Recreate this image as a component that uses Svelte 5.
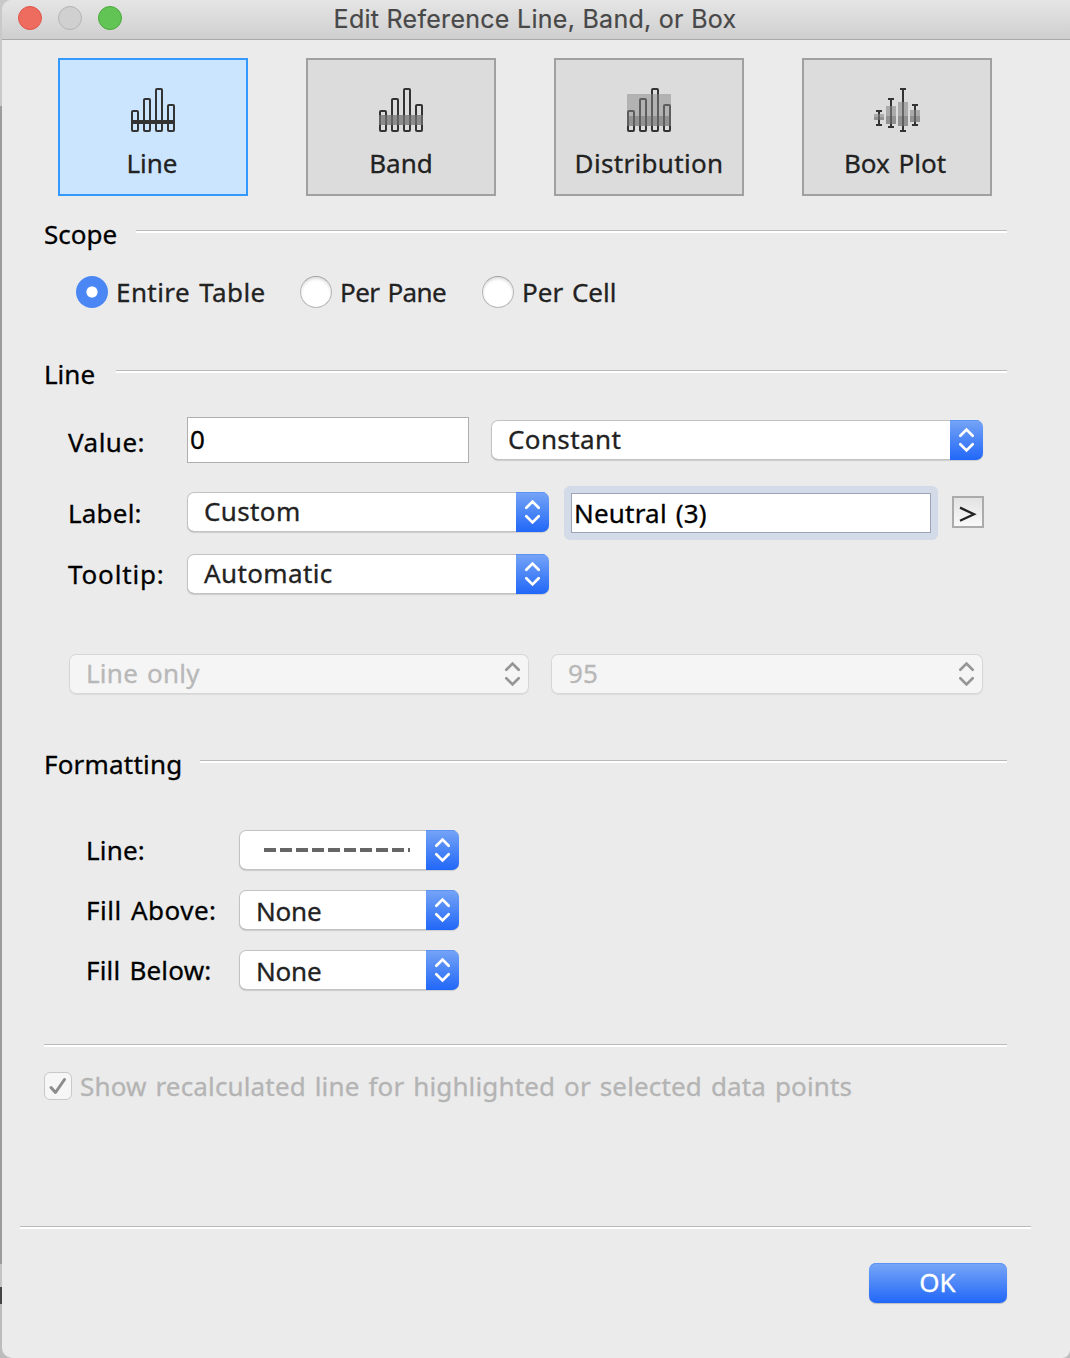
<script>
  const bars = [[1, 23], [13, 11], [25, 1], [37, 17]];
  // x, whisker top, whisker bottom, box top, box middle, box bottom
  const boxes = [
    [5, 22, 38, 26, 29, 32],
    [17, 10, 40, 18, 28, 36],
    [29, 0, 44, 14, 28, 38],
    [41, 16, 38, 22, 28, 34]
  ];
  const tabs = [
    { id: 'line', label: 'Line' },
    { id: 'band', label: 'Band' },
    { id: 'distribution', label: 'Distribution' },
    { id: 'box', label: 'Box Plot' }
  ];
  const scopes = ['Entire Table', 'Per Pane', 'Per Cell'];
  let tab = $state('line');
  let scope = $state('Entire Table');
</script>

{#snippet arrows()}
  <span class="arrows">
    <svg width="33" height="40" viewBox="0 0 33 40" fill="none" stroke-width="2.7" stroke-linecap="round" stroke-linejoin="miter">
      <path d="M10.3 15.8 L16.5 9.6 L22.7 15.8 M10.3 24.2 L16.5 30.4 L22.7 24.2" />
    </svg>
  </span>
{/snippet}

{#snippet select(cls, text)}
  <div class="select {cls}"><span class="value">{text}</span>{@render arrows()}</div>
{/snippet}

<div class="window">
  <header>
    <i class="light red"></i><i class="light grey"></i><i class="light green"></i>
    <h1><span>Edit Reference Line, Band, or Box</span></h1>
  </header>

  <nav>
    {#each tabs as t}
      <button class="tab {t.id}" class:active={tab === t.id} onclick={() => (tab = t.id)}>
        <svg width="46" height="44" viewBox="{t.id === 'box' ? 0 : -1} 0 46 44">
          {#if t.id === 'box'}
            {#each boxes as [x, top, bottom, b1, b2, b3]}
              <path d="M{x} {top}V{bottom}M{x - 3} {top + 1}H{x + 3}M{x - 3} {bottom - 1}H{x + 3}" stroke="#333" stroke-width="2" fill="none" />
              <rect x={x - 5} y={b1} width="10" height={b2 - b1} fill="#888" fill-opacity=".6" />
              <rect x={x - 5} y={b2} width="10" height={b3 - b2} fill="#707070" fill-opacity=".7" />
            {/each}
          {:else}
            {#each bars as [x, y]}
              <rect {x} {y} width="6" height={43 - y} rx="1" fill="none" stroke="#333" stroke-width="2" />
            {/each}
            {#if t.id === 'line'}
              <rect y="32" width="44" height="4" fill="#333" />
            {:else if t.id === 'band'}
              <rect y="27" width="44" height="10" fill="#727272" fill-opacity=".75" />
            {:else}
              <rect y="6" width="44" height="22" fill="#888" fill-opacity=".5" />
              <rect y="28" width="44" height="10" fill="#727272" fill-opacity=".7" />
            {/if}
          {/if}
        </svg>
        <span>{t.label}</span>
      </button>
    {/each}
  </nav>

  <section class="scope">
    <h2><span class="t-scope">Scope</span><i class="rule"></i></h2>
    <div class="radios">
      {#each scopes as s}
        <label>
          <input type="radio" name="scope" value={s} bind:group={scope} />
          <span>{s}</span>
        </label>
      {/each}
    </div>
  </section>

  <section class="line">
    <h2><span class="t-line">Line</span><i class="rule"></i></h2>
    <div class="row value-row">
      <span class="label t-value">Value:</span>
      <div class="number">0</div>
      {@render select('constant', 'Constant')}
    </div>
    <div class="row label-row">
      <span class="label t-label">Label:</span>
      {@render select('medium custom', 'Custom')}
      <div class="focus"><div class="field"><span>Neutral (3)</span></div></div>
      <button class="insert" aria-label="Insert">
        <svg width="28" height="28" viewBox="0 0 28 28"><path d="M6 9.6 L20 16.2 L6 22.8" fill="none" stroke="#222" stroke-width="2.3" /></svg>
      </button>
    </div>
    <div class="row tooltip-row">
      <span class="label t-tooltip">Tooltip:</span>
      {@render select('medium automatic', 'Automatic')}
    </div>
    <div class="row interval-row">
      {@render select('disabled only', 'Line only')}
      {@render select('disabled level', '95')}
    </div>
  </section>

  <section class="formatting">
    <h2><span class="t-formatting">Formatting</span><i class="rule"></i></h2>
    <div class="rows">
      <div class="row">
        <span class="label t-fline">Line:</span>
        <div class="select small">
          <svg class="dash" width="148" height="4" viewBox="0 0 148 4"><path d="M1 2H147" stroke="#666" stroke-width="4" stroke-dasharray="12 4" /></svg>
          {@render arrows()}
        </div>
      </div>
      <div class="row">
        <span class="label t-above">Fill Above:</span>
        {@render select('small low', 'None')}
      </div>
      <div class="row">
        <span class="label t-below">Fill Below:</span>
        {@render select('small low', 'None')}
      </div>
    </div>
    <i class="rule"></i>
  </section>

  <div class="recalc">
    <span class="check"><svg width="26" height="26" viewBox="0 0 26 26"><path d="M6 14.5 L10.5 19.5 L19.5 6.5" fill="none" stroke="#8c8c8c" stroke-width="3" stroke-linecap="round" stroke-linejoin="round" /></svg></span>
    <span class="recalc-text">Show recalculated line for highlighted or selected data points</span>
  </div>

  <footer>
    <i class="rule"></i>
    <button class="ok"><span>OK</span></button>
  </footer>
</div>

<style>
  :global(body) {
    background: linear-gradient(#c9c9c9 0 106px, #9c9c9c 106px 1264px, #c4c4c4 1264px 1287px, #444 1287px 1304px, #bcbcbc 1304px);
  }
  :global(*) { box-sizing: border-box; }
  .window {
    margin-left: 2px;
    width: 1068px;
    height: 1358px;
    overflow: hidden;
    background: #ebebeb;
    border-radius: 10px 0 8px 10px;
    font: 26px/40px "Noto Sans", "Open Sans", sans-serif;
    word-spacing: 2px;
    -webkit-text-stroke: 0.3px currentColor;
    color: #000;
    white-space: nowrap;
  }
  button { font: inherit; color: inherit; word-spacing: inherit; padding: 0; margin: 0; }
  header {
    display: flex;
    align-items: center;
    gap: 16px;
    height: 40px;
    padding: 0 0 4px 16px;
    background: linear-gradient(#e5e5e5, #cfcfcf);
    border-bottom: 1px solid #a9a9a9;
  }
  .light { flex: none; width: 24px; height: 24px; border-radius: 50%; border: 1px solid; }
  .red { background: #ed6b5f; border-color: #e0554b; }
  .grey { background: #d0d0d0; border-color: #b4b4b4; }
  .green { background: #61c454; border-color: #4aa93c; }
  h1 {
    flex: 1;
    margin: 0;
    padding: 2px 138px 0 0;
    text-align: center;
    font: 400 25px/36px Inter, Roboto, sans-serif;
    letter-spacing: 0.28px;
    color: #484848;
    word-spacing: 0;
    -webkit-text-stroke: 0.2px currentColor;
  }
  nav { display: flex; gap: 58px; padding: 18px 56px 0; }
  .tab {
    width: 190px;
    height: 138px;
    border: 2px solid #a0a0a0;
    background: #dcdcdc;
    display: flex;
    flex-direction: column;
    align-items: center;
    padding-top: 28px;
    color: #222;
  }
  .tab.active { border-color: #3399ff; background: #cce5ff; }
  .tab svg { flex: none; display: block; }
  .tab span { margin-top: 11px; line-height: 40px; }
  .line.tab span { margin-left: -2px; }
  .distribution span { letter-spacing: 0.32px; }
  .box span { margin-left: -4px; }
  h2 { margin: 0; height: 40px; display: flex; font-size: inherit; font-weight: 400; }
  .rule { display: block; height: 3px; background: #fff; border-top: 1px solid #bababa; }
  h2 .rule { flex: 1; margin-top: 16px; }
  section { padding: 0 63px 0 42px; }
  .scope { padding-top: 18px; }
  .t-scope { width: 92px; }
  .t-line { width: 72px; }
  .t-formatting { width: 156px; letter-spacing: 0.2px; }
  .radios { display: flex; margin-top: 18px; padding-left: 32px; height: 40px; }
  label { display: flex; align-items: center; gap: 8px; color: #222; }
  label:nth-child(1) { width: 224px; letter-spacing: 0.42px; }
  label:nth-child(2) { width: 182px; letter-spacing: -0.6px; }
  input {
    appearance: none;
    width: 32px;
    height: 32px;
    margin: 0;
    border: 1px solid #b8b8b8;
    border-top-color: #a0a0a0;
    border-radius: 50%;
    background: #fff;
    box-shadow: inset 0 2px 3px #0002;
  }
  input:checked {
    border: 0;
    background: radial-gradient(circle, #fff 5.2px, #4a87f5 6px);
    box-shadow: none;
  }
  .line:not(.tab) { padding-top: 42px; }
  .row { display: flex; align-items: center; height: 40px; }
  .label { flex: none; }
  .line .label { width: 119px; margin-left: 24px; }
  .value-row { height: 46px; margin-top: 23px; }
  .t-value { padding-top: 4px; letter-spacing: 0.5px; }
  .t-label { letter-spacing: 0.2px; }
  .t-tooltip { letter-spacing: 0.85px; }
  .number { width: 282px; height: 46px; margin-right: 22px; padding: 1px 0 0 2px; border: 1px solid #aeaeae; background: #fff; }
  .select {
    display: flex;
    justify-content: space-between;
    width: 220px;
    height: 40px;
    overflow: hidden;
    border-radius: 7px;
    background: #fff;
    color: #222;
    padding-left: 17px;
    box-shadow: inset 0 0 0 1px #c2c2c2, inset 0 -1px #adadad, 0 1px 1px #0002;
  }
  .select .value { line-height: 38px; letter-spacing: 0.38px; }
  .select.low .value { line-height: 42px; letter-spacing: -0.2px; }
  .constant { width: 492px; }
  .medium { width: 362px; }
  .arrows { width: 33px; height: 40px; background: linear-gradient(#76a5f6, #2167f8); box-shadow: inset 0 1px #5b93f4; stroke: #fff; }
  .arrows svg { display: block; }
  .label-row { height: 54px; margin-top: 23px; }
  .label-row .select { margin-top: -2px; }
  .focus { width: 374px; height: 54px; margin: 0 14px 0 15px; padding: 7px; background: #d3dae8; border-radius: 6px; }
  .field { height: 40px; line-height: 39px; padding-left: 2px; border: 1px solid #9ba5b8; background: #fff; letter-spacing: 0.2px; }
  .insert { width: 32px; height: 32px; margin-top: -2px; border: 2px solid #ababab; background: linear-gradient(#e3e3e3, #f9f9f9); }
  .insert svg { display: block; }
  .tooltip-row { margin-top: 14px; }
  .interval-row { margin-top: 60px; padding-left: 25px; gap: 22px; }
  .disabled { background: #f5f5f5; color: #b8b8b8; box-shadow: inset 0 0 0 1px #d6d6d6, 0 1px 1px #0001; }
  .disabled .arrows { background: none; box-shadow: none; stroke: #969696; }
  .disabled .value { letter-spacing: 0.25px; }
  .only { width: 460px; }
  .level { width: 432px; }
  .formatting { padding-top: 50px; }
  .rows { display: flex; flex-direction: column; gap: 20px; margin: 46px 0 54px; padding-left: 42px; }
  .rows .label { width: 153px; }
  .t-fline, .t-below { letter-spacing: 0.2px; }
  .t-above { letter-spacing: 0.5px; }
  .dash { margin: 18px 0 0 7px; }
  .recalc { display: flex; align-items: center; gap: 8px; height: 40px; margin: 19px 0 0 42px; color: #b4b4b4; }
  .recalc-text { letter-spacing: 0.15px; }
  .check { width: 28px; height: 28px; border: 1px solid #c9c9c9; border-radius: 6px; background: #f6f6f6; }
  .check svg { display: block; }
  footer { display: flex; flex-direction: column; padding: 120px 39px 0 18px; }
  .ok {
    align-self: flex-end;
    width: 138px;
    height: 40px;
    margin: 34px 24px 0 0;
    padding: 0 1px 2px 0;
    border: 0;
    border-radius: 7px;
    background: linear-gradient(#78a7f7, #2167f8);
    color: #fff;
    line-height: 38px;
    box-shadow: inset 0 1px #5b93f4, 0 1px 1px #0003;
  }
</style>
